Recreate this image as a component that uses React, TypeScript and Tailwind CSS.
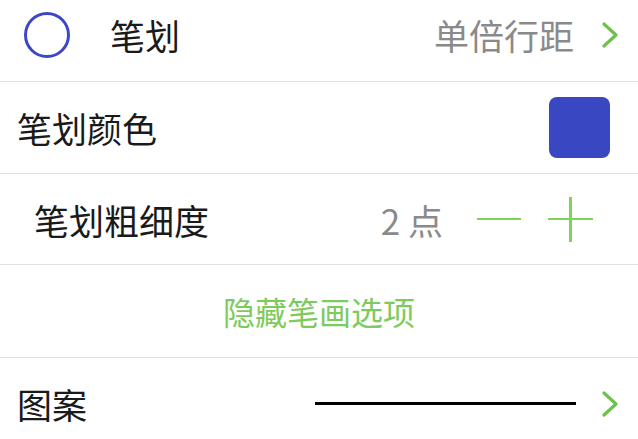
import { type ReactNode } from "react";

const font = { fontFamily: '"Noto Sans CJK SC", "Noto Sans", sans-serif' };

function Chevron() {
  return (
    <svg width="20" height="26" viewBox="0 0 20 26" className="shrink-0">
      <polyline points="4,2 16,13 4,24" fill="none" stroke="#6cc24a" strokeWidth="3.2" strokeLinecap="round" strokeLinejoin="round" />
    </svg>
  );
}

function Row({ className, children }: { className: string; children: ReactNode }) {
  return <div className={`flex items-center border-b border-[#e2e2e2] ${className}`}>{children}</div>;
}

export default function App() {
  return (
    <div className="h-[439px] w-[638px] overflow-hidden bg-white text-[35px] font-normal leading-none text-[#1a1a1a]" style={font}>
      <Row className="h-[82px] pb-[12px] pl-[24px] pr-[18px]">
        <div className="size-[46px] shrink-0 rounded-full border-[3.5px] border-[#3b47c6]" />
        <span className="ml-[40px]">笔划</span>
        <span className="ml-auto text-[#8a8a8a]">单倍行距</span>
        <span className="ml-[26px] flex">
          <Chevron />
        </span>
      </Row>
      <Row className="h-[92px] pl-[17px] pr-[28px]">
        <span>笔划颜色</span>
        <div className="ml-auto size-[61px] rounded-[8px] bg-[#3a47c3]" />
      </Row>
      <Row className="h-[91px] pl-[34px] pr-[45px]">
        <span>笔划粗细度</span>
        <span className="ml-auto text-[#8a8a8a]">2 点</span>
        <div className="ml-[34px] h-[2.5px] w-[44px] bg-[#7ed45a]" />
        <div className="relative ml-[27px] size-[45px]">
          <div className="absolute left-0 top-[21px] h-[2.5px] w-[45px] bg-[#7ed45a]" />
          <div className="absolute left-[21px] top-0 h-[45px] w-[2.5px] bg-[#7ed45a]" />
        </div>
      </Row>
      <Row className="h-[93px] justify-center">
        <span className="text-[32px] text-[#7dcb5c]">隐藏笔画选项</span>
      </Row>
      <div className="flex h-[91px] items-center pl-[17px] pr-[18px]">
        <span>图案</span>
        <div className="ml-auto h-[3px] w-[261px] bg-black" />
        <span className="ml-[24px] flex">
          <Chevron />
        </span>
      </div>
    </div>
  );
}
